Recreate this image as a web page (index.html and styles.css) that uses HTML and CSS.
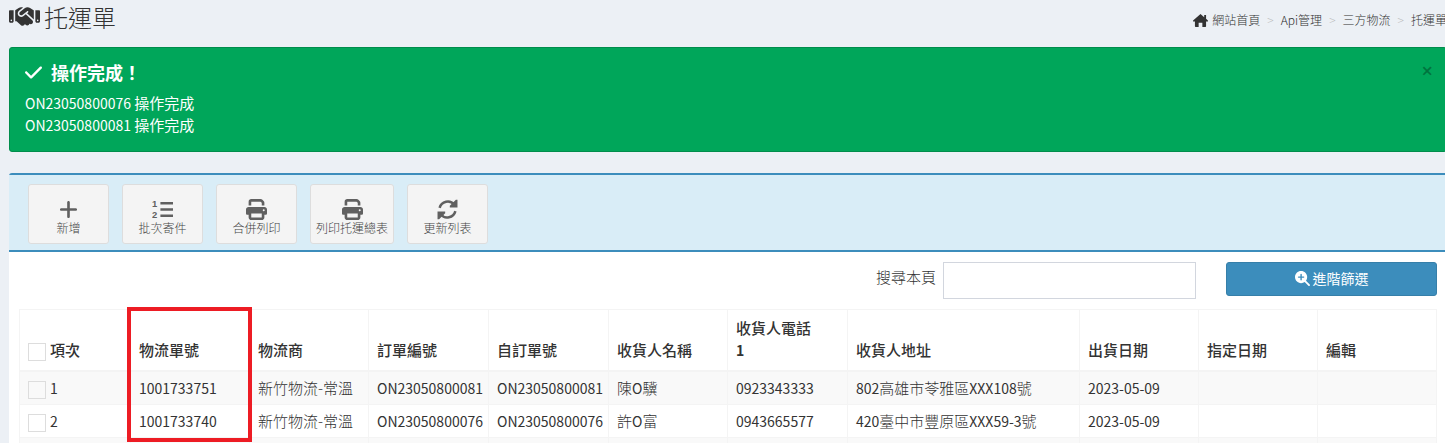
FILE: index.html
```html
<!DOCTYPE html>
<html lang="zh-Hant">
<head>
    <meta charset="UTF-8">
    <meta name="viewport" content="width=device-width, initial-scale=1.0">
    <title>托運單</title>
    <link rel="stylesheet" href="styles.css">
</head>
<body>
    <div class="wrapper">
        <header class="content-header">
            <h1>
                <svg class="icon-title" viewBox="0 0 640 512"><path d="M323.4 85.2l-96.8 78.4c-16.1 13-19.2 36.4-7 53.1c12.9 17.8 38 21.3 55.3 7.8l99.3-77.2c7-5.4 17-4.2 22.5 2.8s4.2 17-2.8 22.5l-20.9 16.2L512 316.8V128h-.7l-3.9-2.5L434.8 79c-15.3-9.8-33.2-15-51.4-15c-21.8 0-43 7.5-60 21.2zm22.8 124.4l-51.7 40.2C263 274.3 217.3 268 193.7 235.6c-22.2-30.5-16.6-73.1 12.7-96.8l83.2-67.3c-11.6-4.9-24.1-7.4-36.8-7.4C234 64 215.7 69.6 200 80l-72 48V352h28.2l91.4 83.4c19.6 17.9 49.9 16.5 67.8-3.1c5.5-6.1 9.2-13.2 11.1-20.6l17 15.6c19.5 17.9 49.9 16.6 67.8-2.9c4.5-4.9 7.8-10.6 9.9-16.5c19.4 13 45.8 10.3 62.1-7.5c17.9-19.5 16.6-49.9-2.9-67.8l-134.2-123zM16 128c-8.800 0-16 7.200-16 16V352c0 17.700 14.300 32 32 32H64c17.700 0 32-14.300 32-32V128H16zM48 320a16 16 0 1 1 0 32 16 16 0 1 1 0-32zM544 128V352c0 17.700 14.300 32 32 32h32c17.700 0 32-14.300 32-32V144c0-8.800-7.200-16-16-16H544zm32 208a16 16 0 1 1 32 0 16 16 0 1 1 -32 0z"/></svg>
                托運單
            </h1>
            <nav>
                <ol class="breadcrumb">
                    <li>
                        <a href="#">
                            <svg class="icon-home" viewBox="0 0 16 14"><path d="M8 0 0 7v1h2v5.200q0 .8.8.8H6V9.500h4V14h3.200q.8 0 .8-.8V8h2V7l-2-1.800V1h-2v2.500z"/></svg>
                            網站首頁
                        </a>
                    </li>
                    <li><a href="#">Api管理</a></li>
                    <li><a href="#">三方物流</a></li>
                    <li>托運單</li>
                </ol>
            </nav>
        </header>

        <div class="alert">
            <button type="button" class="close" aria-label="Close">×</button>
            <h4>
                <svg class="icon-check" viewBox="0 64 448 384"><path d="M438.6 105.4c12.5 12.5 12.5 32.8 0 45.3l-256 256c-12.5 12.5-32.8 12.5-45.3 0l-128-128c-12.5-12.5-12.5-32.8 0-45.3s32.8-12.5 45.3 0L160 338.7 393.4 105.4c12.5-12.5 32.8-12.5 45.3 0z"/></svg>
                操作完成！
            </h4>
            <p><span class="latin">ON23050800076</span> 操作完成</p>
            <p><span class="latin">ON23050800081</span> 操作完成</p>
        </div>

        <main class="box">
            <div class="toolbar">
                <button type="button" class="btn-app">
                    <svg viewBox="0 0 448 512"><path d="M256 80c0-17.7-14.3-32-32-32s-32 14.3-32 32V224H48c-17.7 0-32 14.3-32 32s14.3 32 32 32H192V432c0 17.7 14.3 32 32 32s32-14.3 32-32V288H400c17.7 0 32-14.3 32-32s-14.3-32-32-32H256V80z"/></svg>
                    新增
                </button>
                <button type="button" class="btn-app">
                    <svg viewBox="0 0 20 20"><text class="list-digit" x="0" y="8">1</text><text class="list-digit" x="0" y="18">2</text><path class="stroke" d="M8 4h12M8 10h12M8 16h12"/></svg>
                    批次寄件
                </button>
                <button type="button" class="btn-app">
                    <svg viewBox="0 0 512 512"><path d="M128 0C92.700 0 64 28.700 64 64v96h64V64H354.700L384 93.300V160h64V93.300c0-17-6.700-33.300-18.700-45.300L400 18.700C388 6.700 371.700 0 354.700 0H128zM384 352v96H128V352H384zm64 32h32c17.700 0 32-14.300 32-32V256c0-35.300-28.700-64-64-64H64c-35.300 0-64 28.700-64 64v96c0 17.700 14.300 32 32 32H64v64c0 35.300 28.700 64 64 64H384c35.300 0 64-28.700 64-64V384zM432 248a24 24 0 1 1 0 48 24 24 0 1 1 0-48z"/></svg>
                    合併列印
                </button>
                <button type="button" class="btn-app">
                    <svg viewBox="0 0 512 512"><path d="M128 0C92.700 0 64 28.700 64 64v96h64V64H354.700L384 93.300V160h64V93.300c0-17-6.700-33.300-18.700-45.300L400 18.700C388 6.700 371.700 0 354.700 0H128zM384 352v96H128V352H384zm64 32h32c17.700 0 32-14.300 32-32V256c0-35.300-28.700-64-64-64H64c-35.300 0-64 28.700-64 64v96c0 17.700 14.300 32 32 32H64v64c0 35.300 28.700 64 64 64H384c35.300 0 64-28.700 64-64V384zM432 248a24 24 0 1 1 0 48 24 24 0 1 1 0-48z"/></svg>
                    列印托運總表
                </button>
                <button type="button" class="btn-app">
                    <svg viewBox="0 0 20 20"><path class="stroke" d="M2.500 8.500A8 8 0 0 1 16.500 5.500M17.500 11.500A8 8 0 0 1 3.500 14.500"/><path d="M19.500.7v7.300h-7.300v-1.500L18 .7zM.5 19.300V12h7.300v1.500L2 19.300z"/></svg>
                    更新列表
                </button>
            </div>

            <div class="box-body">
                <div class="filter">
                    <label for="search">搜尋本頁</label>
                    <input type="text" id="search" class="search">
                    <button type="button" class="btn-filter">
                        <svg viewBox="0 0 512 512"><path d="M416 208c0 45.900-14.900 88.300-40 122.700L502.600 457.400c12.500 12.500 12.500 32.800 0 45.300s-32.800 12.500-45.300 0L330.700 376c-34.400 25.200-76.800 40-122.700 40C93.100 416 0 322.900 0 208S93.100 0 208 0S416 93.100 416 208zM184 296c0 13.300 10.700 24 24 24s24-10.700 24-24V232h64c13.300 0 24-10.700 24-24s-10.700-24-24-24H232V120c0-13.300-10.700-24-24-24s-24 10.700-24 24v64H120c-13.300 0-24 10.700-24 24s10.700 24 24 24h64v64z"/></svg>
                        進階篩選
                    </button>
                </div>

                <table class="table">
                    <colgroup>
                        <col class="col-index">
                        <col class="col-text">
                        <col class="col-text">
                        <col class="col-number">
                        <col class="col-number">
                        <col class="col-text">
                        <col class="col-number">
                        <col class="col-address">
                        <col class="col-text">
                        <col class="col-text">
                        <col class="col-text">
                    </colgroup>
                    <thead>
                        <tr>
                            <th><label class="check"><input type="checkbox">項次</label></th>
                            <th class="marked">物流單號<span class="marker"></span></th>
                            <th>物流商</th>
                            <th>訂單編號</th>
                            <th>自訂單號</th>
                            <th>收貨人名稱</th>
                            <th>收貨人電話 <b class="latin">1</b></th>
                            <th>收貨人地址</th>
                            <th>出貨日期</th>
                            <th>指定日期</th>
                            <th>編輯</th>
                        </tr>
                    </thead>
                    <tbody>
                        <tr>
                            <td><label class="check"><input type="checkbox"><span class="latin">1</span></label></td>
                            <td class="latin">1001733751</td>
                            <td>新竹物流-常溫</td>
                            <td class="latin">ON23050800081</td>
                            <td class="latin">ON23050800081</td>
                            <td>陳<span class="latin">O</span>驥</td>
                            <td class="latin">0923343333</td>
                            <td><span class="latin">802</span>高雄市苓雅區<span class="latin">XXX108</span>號</td>
                            <td class="latin">2023-05-09</td>
                            <td></td>
                            <td></td>
                        </tr>
                        <tr>
                            <td><label class="check"><input type="checkbox"><span class="latin">2</span></label></td>
                            <td class="latin">1001733740</td>
                            <td>新竹物流-常溫</td>
                            <td class="latin">ON23050800076</td>
                            <td class="latin">ON23050800076</td>
                            <td>許<span class="latin">O</span>富</td>
                            <td class="latin">0943665577</td>
                            <td><span class="latin">420</span>臺中市豐原區<span class="latin">XXX59-3</span>號</td>
                            <td class="latin">2023-05-09</td>
                            <td></td>
                            <td></td>
                        </tr>
                        <tr>
                            <td></td>
                            <td></td>
                            <td></td>
                            <td></td>
                            <td></td>
                            <td></td>
                            <td></td>
                            <td></td>
                            <td></td>
                            <td></td>
                            <td></td>
                        </tr>
                    </tbody>
                </table>
            </div>
        </main>
    </div>
</body>
</html>
```
FILE: styles.css
```css
* {
    box-sizing: border-box;
}
html {
    overflow: hidden;
}
body {
    margin: 0;
    background-color: #ecf0f5;
    color: #333;
    font-family: "Noto Sans CJK TC", sans-serif;
    font-size: 15px;
    font-weight: 300;
    line-height: 22px;
}
button, input {
    font-family: inherit;
    font-weight: inherit;
}
svg {
    fill: currentColor;
    flex: none;
}
.stroke {
    fill: none;
    stroke: currentColor;
    stroke-width: 2.4;
}
.latin {
    font-size: 14px;
    font-weight: 400;
}

/* header */
.wrapper {
    margin: 0 -2px 0 9px;
}
.content-header {
    display: flex;
    justify-content: space-between;
    height: 47px;
}
.content-header h1 {
    display: flex;
    align-items: center;
    gap: 4px;
    height: 33px;
    margin: 0;
    font-size: 24px;
    font-weight: 300;
}
.icon-title {
    width: 31px;
    height: 25px;
}
.breadcrumb {
    display: flex;
    align-items: center;
    height: 40px;
    margin: 0;
    padding: 0;
    list-style: none;
    font-size: 12px;
    white-space: nowrap;
}
.breadcrumb li + li::before {
    content: ">";
    padding: 0 7px;
    color: #bbb;
}
.breadcrumb a {
    color: inherit;
    text-decoration: none;
}
.breadcrumb li:first-child a {
    display: flex;
    align-items: center;
    gap: 4px;
}
.breadcrumb li {
    display: flex;
}
.icon-home {
    width: 15px;
    height: 13px;
}

/* alert */
.alert {
    position: relative;
    margin-bottom: 21px;
    padding: 14px 15px 15px;
    border: 1px solid #008d4c;
    border-radius: 3px;
    background-color: #00a65a;
    color: #fff;
}
.alert h4 {
    display: flex;
    align-items: center;
    gap: 9px;
    margin: 0 0 10px;
    font-size: 18px;
    font-weight: 700;
    line-height: 20px;
}
.alert p {
    margin: 0;
    font-weight: 400;
}
.icon-check {
    width: 17px;
    height: 15px;
}
.close {
    position: absolute;
    top: 12px;
    right: 13px;
    padding: 0;
    border: none;
    background: none;
    color: #000;
    font-family: "Open Sans", sans-serif;
    font-size: 20px;
    font-weight: 600;
    line-height: 22px;
    opacity: 0.3;
    cursor: pointer;
}

/* box */
.box {
    border-top: 2px solid #3c8dbc;
    border-radius: 3px;
    background-color: #fff;
}
.toolbar {
    display: flex;
    gap: 13px;
    padding: 9px 19px 6px;
    border-bottom: 2px solid #3c8dbc;
    background-color: #d9edf7;
}
.btn-app {
    display: flex;
    flex-direction: column;
    align-items: center;
    min-width: 81px;
    height: 60px;
    padding: 14px 5px 0;
    border: 1px solid #ddd;
    border-radius: 3px;
    background-color: #f4f4f4;
    color: #444;
    font-size: 12px;
    line-height: 16px;
    cursor: pointer;
}
.btn-app:hover {
    background-color: #e7e7e7;
}
.btn-app svg {
    width: 21px;
    height: 21px;
    color: #606060;
}
.list-digit {
    font-family: "Liberation Sans", sans-serif;
    font-size: 9px;
    font-weight: 700;
}
.box-body {
    padding: 10px 10px 0;
}
.filter {
    display: flex;
    justify-content: flex-end;
    align-items: flex-start;
    margin-bottom: 10px;
}
.filter label {
    padding: 4px 7px;
}
.search {
    width: 253px;
    height: 37px;
    margin-right: 30px;
    padding: 6px 12px;
    border: 1px solid #d2d6de;
    font-size: 15px;
}
.btn-filter {
    display: flex;
    justify-content: center;
    align-items: center;
    gap: 3px;
    width: 211px;
    height: 34px;
    padding: 0 6px 2px;
    border: 1px solid #367fa9;
    border-radius: 3px;
    background-color: #3c8dbc;
    color: #fff;
    font-size: 14px;
    font-weight: 400;
    cursor: pointer;
}
.btn-filter svg {
    width: 15px;
    height: 15px;
}

/* table */
.table {
    width: 100%;
    border-collapse: collapse;
    table-layout: fixed;
}
.col-index {
    width: 111px;
}
.col-text {
    width: 119px;
}
.col-number {
    width: 120px;
}
.col-address {
    width: 232px;
}
.table th, .table td {
    height: 33px;
    padding: 5px 8px;
    border: 1px solid #f4f4f4;
    text-align: left;
}
.table th {
    padding: 7px 8px 9px;
    border-bottom-width: 2px;
    font-weight: 500;
    vertical-align: bottom;
}
.table .latin {
    white-space: nowrap;
}
.table b.latin {
    display: block;
    font-weight: 700;
}
.table tbody tr:nth-child(odd) {
    background-color: #f9f9f9;
}
.check {
    display: flex;
    align-items: center;
    gap: 4px;
}
.check input {
    appearance: none;
    width: 18px;
    height: 18px;
    margin: 3px 0 0;
    border: 1px solid #ddd;
    background-color: transparent;
}
.check input:checked {
    background-color: #3c8dbc;
}
.marked {
    position: relative;
}
.marker {
    position: absolute;
    top: -3px;
    left: -4px;
    right: -3px;
    height: 135px;
    border: 4px solid #ed1c24;
    pointer-events: none;
}
```
